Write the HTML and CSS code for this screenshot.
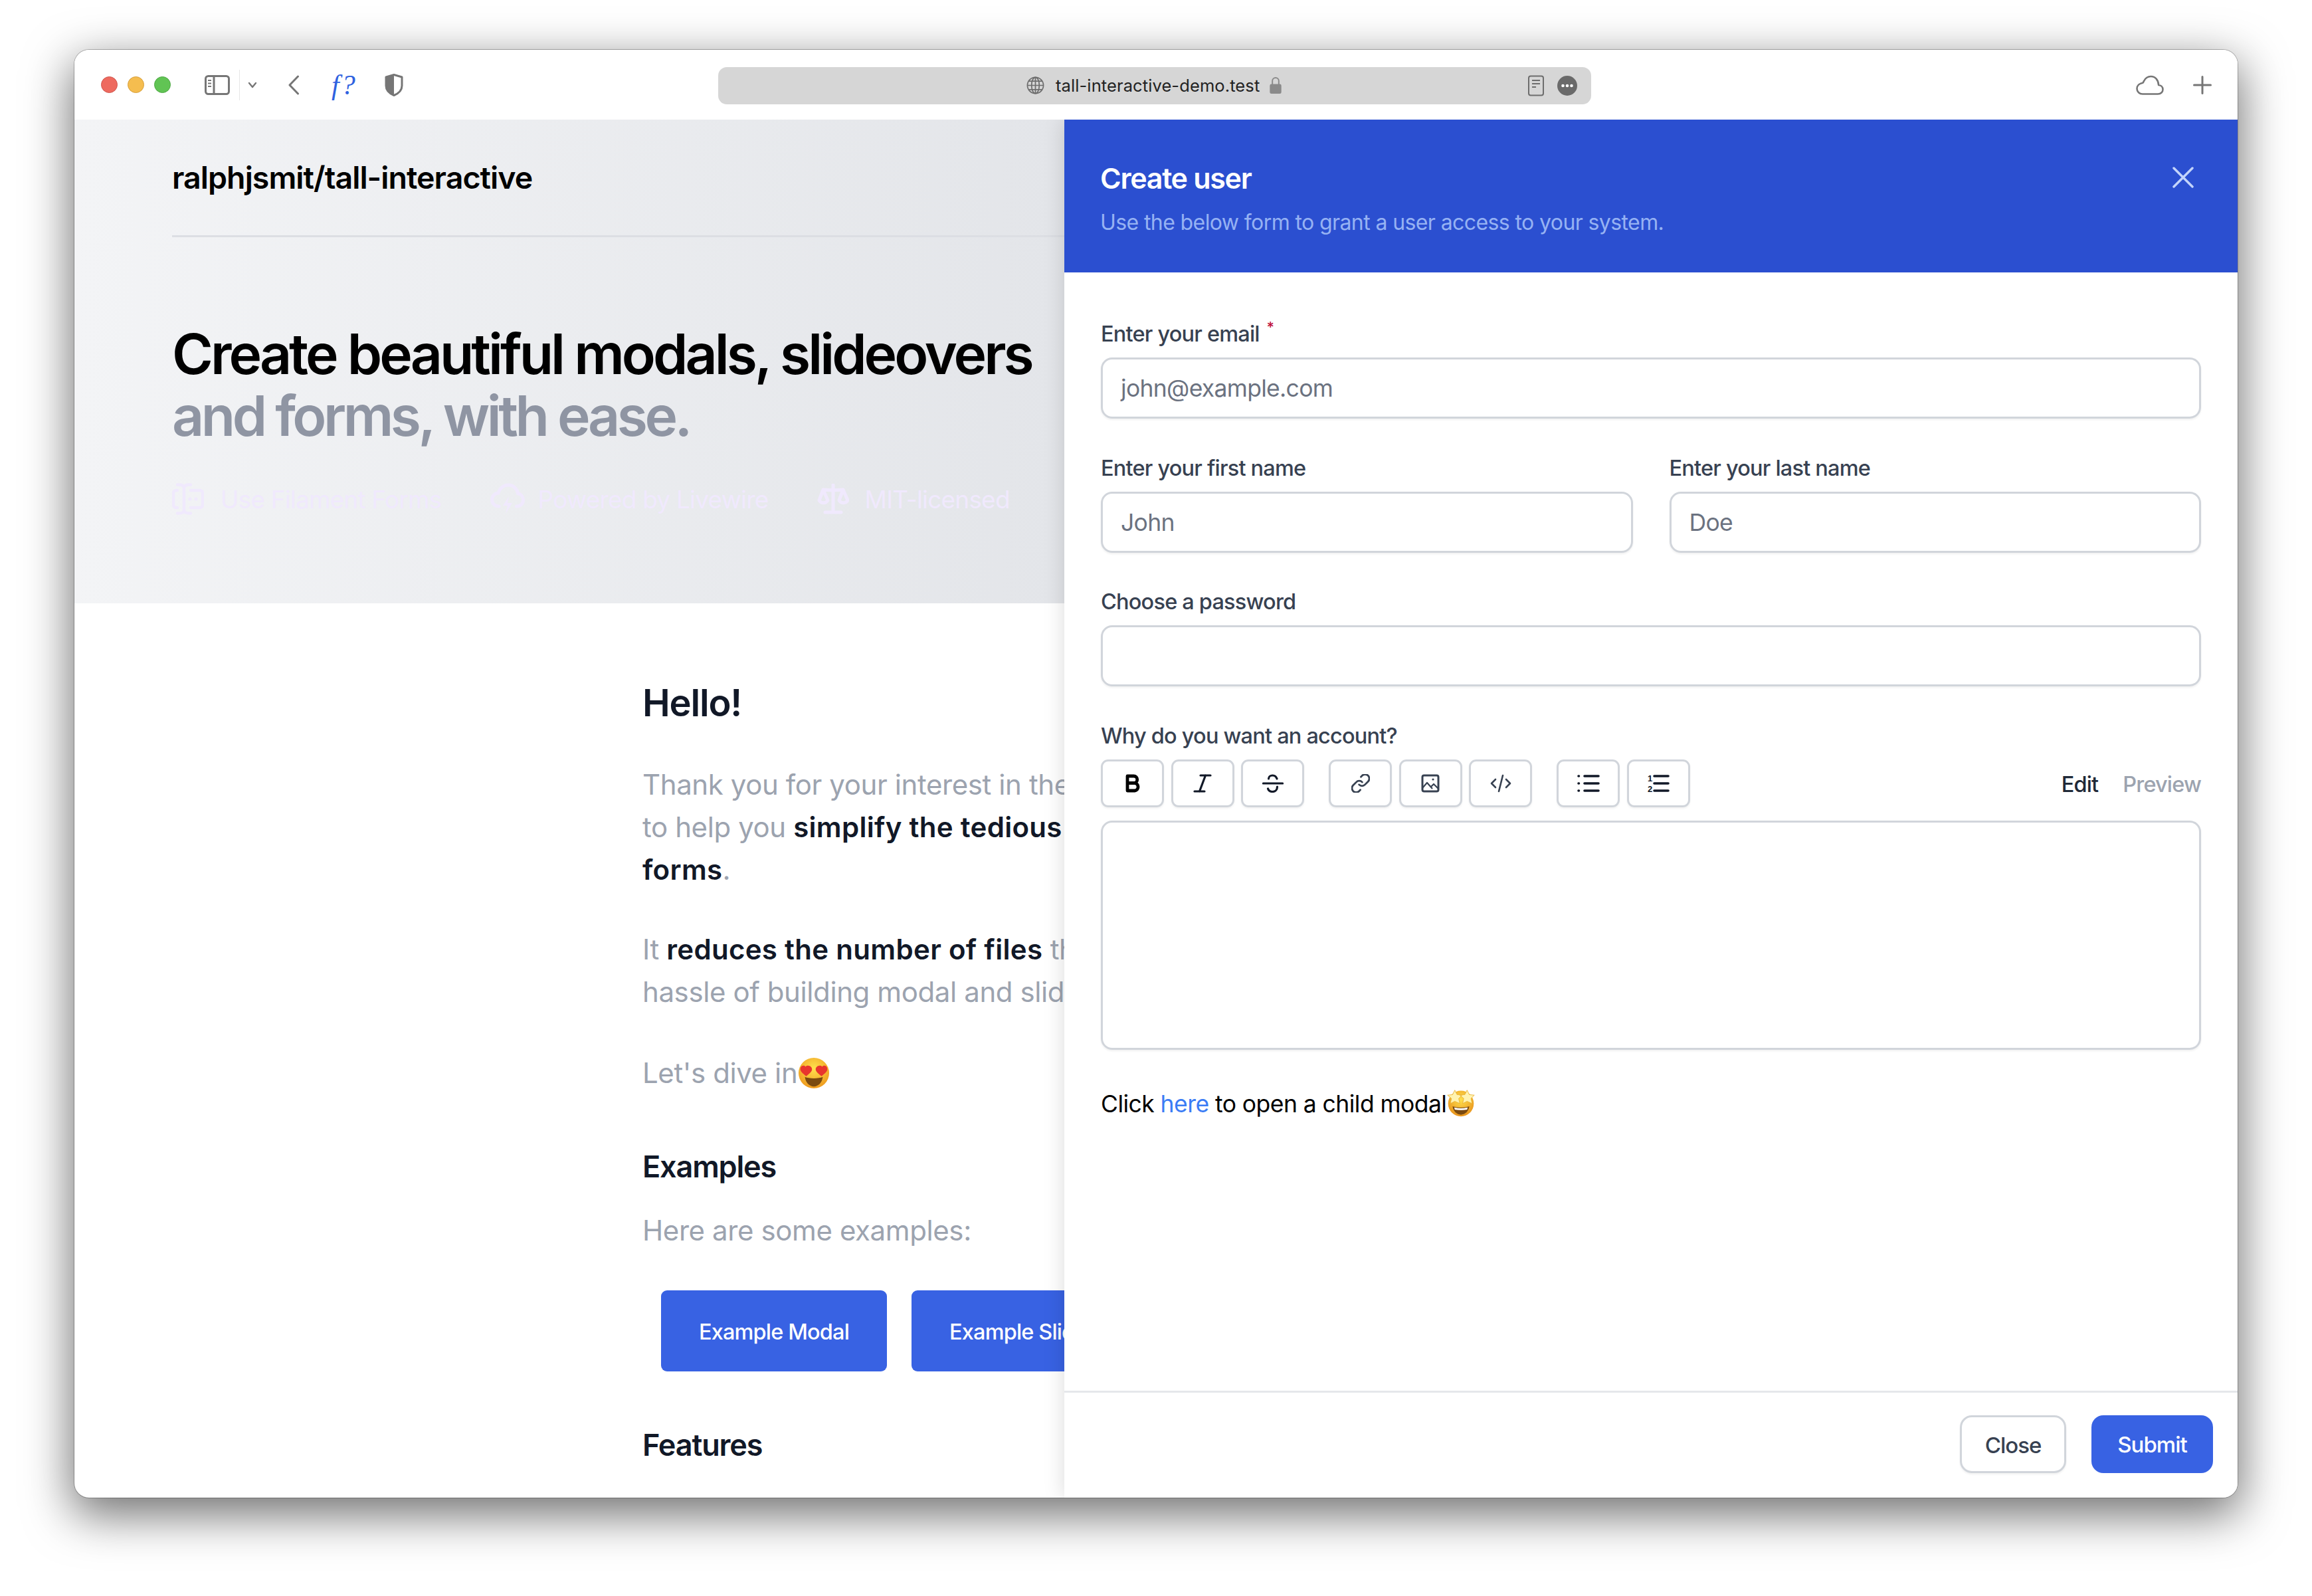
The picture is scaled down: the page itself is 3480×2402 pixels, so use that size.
FILE: index.html
```html
<!DOCTYPE html>
<html>
<head>
	<meta charset="UTF-8">
	<title>tall-interactive-demo.test</title>
	<link rel="stylesheet" href="styles.css">
</head>
<body>
<div class="window">
	<div class="toolbar">
		<div class="toolbar-left">
			<span class="light light-red"></span>
			<span class="light light-yellow"></span>
			<span class="light light-green"></span>
			<svg class="tb-sidebar" viewBox="0 0 38 30" fill="none" stroke="#767676" stroke-width="3"><rect x="1.5" y="1.5" width="35" height="27" rx="4"/><path d="M14 2v26"/><path d="M5 8h5M5 12.500h5M5 17h5" stroke-width="2"/></svg>
			<span class="tb-divider"></span>
			<svg class="tb-chevron" viewBox="0 0 14 10" fill="none" stroke="#767676" stroke-width="2.400" stroke-linecap="round" stroke-linejoin="round"><path d="M2 2l5 6 5-6"/></svg>
			<svg class="tb-back" viewBox="0 0 18 30" fill="none" stroke="#767676" stroke-width="3" stroke-linecap="round" stroke-linejoin="round"><path d="M15.500 2L3 15l12.500 13"/></svg>
			<span class="tb-ext">f?</span>
			<svg class="tb-shield" viewBox="0 0 28 34" fill="none"><path d="M14 1.500L2 5v13c0 7 6 12 12 14.500C20 30 26 25 26 18V5z" stroke="#767676" stroke-width="3" stroke-linejoin="round"/><path d="M14 1.500L2 5v13c0 7 6 12 12 14.500z" fill="#767676"/></svg>
		</div>
		<div class="url-bar">
			<div class="url-center">
				<svg class="url-globe" viewBox="0 0 28 28" fill="none" stroke="#6d6d6d" stroke-width="1.800"><circle cx="14" cy="14" r="12.500"/><ellipse cx="14" cy="14" rx="6" ry="12.500"/><path d="M14 1.500v25M2 14h24M4 7.500h20M4 20.500h20"/></svg>
				<span class="url-text">tall-interactive-demo.test</span>
				<svg class="url-lock" viewBox="0 0 20 28" fill="none"><path d="M5 13V7a5 5 0 0 1 10 0v6" stroke="#8a8a8a" stroke-width="2"/><rect x="1" y="12" width="18" height="15" rx="2.500" fill="#8a8a8a"/></svg>
			</div>
			<svg class="url-doc" viewBox="0 0 26 32" fill="none" stroke="#6d6d6d" stroke-width="2"><rect x="2" y="1.500" width="22" height="29" rx="3"/><path d="M7 8h12M7 13h12M7 18h6"/></svg>
			<svg class="url-more" viewBox="0 0 30 30"><circle cx="15" cy="15" r="15" fill="#6a6a6a"/><circle cx="8.500" cy="15" r="2.300" fill="#fff"/><circle cx="15" cy="15" r="2.300" fill="#fff"/><circle cx="21.500" cy="15" r="2.300" fill="#fff"/></svg>
		</div>
		<div class="toolbar-right">
			<svg class="tb-cloud" viewBox="0 0 42 30" fill="none" stroke="#767676" stroke-width="2.600" stroke-linejoin="round"><path d="M10 28.500h23c4.500 0 7.500-3 7.500-6.800 0-3.800-2.900-6.500-6.400-6.700C33.800 7.500 29 2 22.500 2c-5 0-8.500 3-10.500 7-1 1.700-1.100 2.300-1.800 2.700C5 12.500 1.500 16 1.500 20.500c0 4.700 3.800 8 8.500 8z"/></svg>
			<svg class="tb-plus" viewBox="0 0 28 28" fill="none" stroke="#767676" stroke-width="3" stroke-linecap="round"><path d="M14 1.500v25M1.500 14h25"/></svg>
		</div>
	</div>
	<div class="viewport">
		<div class="page">
			<div class="hero">
				<div class="nav">ralphjsmit/tall-interactive</div>
				<h1 class="hero-title">Create beautiful modals, slideovers<br><span class="hero-muted">and forms, with ease.</span></h1>
				<div class="hero-features">
					<span class="feature">
						<svg class="feature-icon" viewBox="0 0 48 48" fill="none" stroke="#f0e9fd" stroke-width="4.500" stroke-linecap="round"><path d="M8 2.500h3c3 0 6 1.500 7 4 1-2.500 4-4 7-4h3M18 6.500v35M8 45.500h3c3 0 6-1.500 7-4 1 2.500 4 4 7 4h3M8 11H6a4 4 0 0 0-4 4v18a4 4 0 0 0 4 4h2M28 11h14a4 4 0 0 1 4 4v18a4 4 0 0 1-4 4H28"/><circle cx="27" cy="24" r="2.600" fill="#f0e9fd" stroke="none"/><circle cx="36" cy="24" r="2.600" fill="#f0e9fd" stroke="none"/></svg>
						Use Filament Forms</span>
					<span class="feature feature-wire">
						<svg class="feature-icon" viewBox="0 0 52 48" fill="none" stroke="#f0e9fd" stroke-width="5" stroke-linecap="round"><path d="M13 35C6 35 2.500 30 2.500 25S6 15.500 12 15C14 8 20 3 27 3c8 0 13.500 6 14.500 12.500 4.500 1 8 5 8 10 0 5.500-4 9.500-10 9.500"/><path d="M28 20l-9 14h7l-3 12 10-16h-7z" fill="#f0e9fd" stroke="none"/></svg>
						Powered by Livewire</span>
					<span class="feature feature-mit">
						<svg class="feature-icon" viewBox="0 0 48 46" fill="none" stroke="#f0e9fd" stroke-width="5" stroke-linecap="round" stroke-linejoin="round"><path d="M24 2v38M12 43h24M9 9c10 1 20 1 30 0M9 9L3 25a7.500 7.500 0 0 0 13 0zM39 9l-6 16a7.500 7.500 0 0 0 13 0z"/></svg>
						MIT-licensed</span>
				</div>
			</div>
			<div class="article">
				<h2 class="article-hello">Hello!</h2>
				<p class="article-p">Thank you for your interest in the<br>to help you <strong>simplify the tedious<br>forms</strong>.</p>
				<p class="article-p">It <strong>reduces the number of files</strong> that<br>hassle of building modal and slideover</p>
				<p class="article-p article-dive">Let's dive in<svg class="emoji" viewBox="0 0 50 50"><defs><radialGradient id="face1" cx="50%" cy="35%" r="65%"><stop offset="0" stop-color="#ffe14d"/><stop offset="1" stop-color="#ee9a1e"/></radialGradient></defs><circle cx="25" cy="25" r="24" fill="url(#face1)"/><path d="M12 15c-4-4-9 0-8 5 1 4 6 7 9 10 3-3 8-6 9-10 1-5-6-9-10-5zM38 15c-4-4-11 0-10 5 1 4 6 7 9 10 3-3 8-6 9-10 1-5-4-9-8-5z" fill="#e8352e"/><path d="M11 31c6 3 22 3 28 0-1 9-7 15-14 15s-13-6-14-15z" fill="#7a4a10"/></svg></p>
				<h3 class="article-h3 article-examples">Examples</h3>
				<p class="article-p article-here">Here are some examples:</p>
				<div class="article-buttons">
					<span class="demo-button">Example Modal</span>
					<span class="demo-button">Example Slideover</span>
				</div>
				<h3 class="article-h3 article-features">Features</h3>
			</div>
		</div>
		<div class="panel">
			<div class="panel-head">
				<div class="panel-titles">
					<div class="panel-title">Create user</div>
					<div class="panel-sub">Use the below form to grant a user access to your system.</div>
				</div>
				<svg class="panel-close" viewBox="0 0 32 32" fill="none" stroke="#c3d4fb" stroke-width="3.500" stroke-linecap="round"><path d="M2 2l28 28M30 2L2 30"/></svg>
			</div>
			<div class="panel-form">
				<div class="field">
					<div class="label">Enter your email <sup class="req">*</sup></div>
					<div class="input">john@example.com</div>
				</div>
				<div class="field-row">
					<div class="field">
						<div class="label">Enter your first name</div>
						<div class="input">John</div>
					</div>
					<div class="field">
						<div class="label">Enter your last name</div>
						<div class="input">Doe</div>
					</div>
				</div>
				<div class="field">
					<div class="label">Choose a password</div>
					<div class="input"></div>
				</div>
				<div class="field">
					<div class="label">Why do you want an account?</div>
					<div class="md-bar">
						<div class="md-group">
							<span class="md-btn"><svg viewBox="0 0 24 28" fill="none" stroke="#000" stroke-width="4.800" stroke-linejoin="round"><path d="M4 3h9.500a5.200 5.200 0 0 1 0 10.500H4zM4 13.500h11a5.800 5.800 0 0 1 0 11.500H4z"/></svg></span>
							<span class="md-btn"><svg viewBox="0 0 28 28" fill="none" stroke="#111827" stroke-width="3.200" stroke-linecap="round"><path d="M11 2h15M2 26h15M18.500 2l-9 24"/></svg></span>
							<span class="md-btn"><svg viewBox="0 0 32 28" fill="none" stroke="#111827" stroke-width="3.200" stroke-linecap="round"><path d="M1.500 14h29M22 7c-1-3-3.500-5-6.500-5C12 2 9.500 4 9.500 7M22.500 19c0 4.500-3 7.500-7 7.500-3.500 0-6-1.500-7-4.500"/></svg></span>
						</div>
						<div class="md-group">
							<span class="md-btn"><svg viewBox="0 0 30 30" fill="none" stroke="#374151" stroke-width="3" stroke-linecap="round"><path d="M12.500 17a6.500 6.500 0 0 0 9.500 0l5-5a6.500 6.500 0 0 0-9.500-9.500l-2 2M17.500 13a6.500 6.500 0 0 0-9.500 0l-5 5a6.500 6.500 0 0 0 9.500 9.500l2-2"/></svg></span>
							<span class="md-btn"><svg viewBox="0 0 28 28" fill="none" stroke="#374151" stroke-width="3" stroke-linejoin="round"><rect x="2" y="2" width="24" height="24" rx="2.500"/><path d="M2 21l7-8 8 9M15 19l4-4 7 7" stroke-width="2.200"/><circle cx="18" cy="8" r="1.600" fill="#374151" stroke="none"/></svg></span>
							<span class="md-btn"><svg viewBox="0 0 34 28" fill="none" stroke="#374151" stroke-width="2.600" stroke-linecap="round" stroke-linejoin="round"><path d="M9 8l-6 6 6 6M25 8l6 6-6 6M20 2l-6 24"/></svg></span>
						</div>
						<div class="md-group">
							<span class="md-btn"><svg viewBox="0 0 34 28" fill="none" stroke="#111827" stroke-width="3.600" stroke-linecap="round"><path d="M11 3h21M11 14h21M11 25h21M2 3h.500M2 14h.500M2 25h.500"/></svg></span>
							<span class="md-btn"><svg viewBox="0 0 34 28" fill="none" stroke="#111827" stroke-width="3.600" stroke-linecap="round"><path d="M11 3h21M11 14h21M11 25h21"/><text class="md-num" x="1" y="11" stroke="none" fill="#111827">1</text><text class="md-num" x="1" y="27" stroke="none" fill="#111827">2</text></svg></span>
						</div>
						<div class="md-tabs">
							<span class="md-tab-on">Edit</span>
							<span class="md-tab-off">Preview</span>
						</div>
					</div>
					<div class="textarea"></div>
				</div>
				<div class="child-line">Click <span class="child-link">here</span> to open a child modal<svg class="emoji emoji-small" viewBox="0 0 50 50"><defs><radialGradient id="face2" cx="50%" cy="35%" r="65%"><stop offset="0" stop-color="#ffe14d"/><stop offset="1" stop-color="#e8931c"/></radialGradient></defs><circle cx="25" cy="26" r="23" fill="url(#face2)"/><path d="M14 2l4 8 9 1-6 6 2 9-9-4-8 4 2-9-7-6 9-1zM36 2l4 8 9 1-6 6 2 9-9-4-8 4 2-9-7-6 9-1z" fill="#fff3b0" stroke="#e8b030"/><path d="M10 31c8 3 22 3 30 0-1 9-8 15-15 15s-14-6-15-15z" fill="#7a4a10"/><path d="M13 33c8 2 16 2 24 0l-1 4c-7 1-15 1-22 0z" fill="#fff"/></svg></div>
			</div>
			<div class="panel-foot">
				<span class="btn btn-close">Close</span>
				<span class="btn btn-submit">Submit</span>
			</div>
		</div>
	</div>
</div>
</body>
</html>
```

FILE: styles.css
```css
html,body{margin:0;padding:0;background:#fff;}
body{font-family:Inter,"Liberation Sans",sans-serif;width:3480px;height:2402px;overflow:hidden;padding:75px 112px 0;box-sizing:border-box;}
p,h1,h2,h3{margin:0;}
svg{display:block;flex:none;}

.window{width:3256px;height:2179px;display:flex;flex-direction:column;background:#fff;border-radius:22px;overflow:hidden;}
.window{box-shadow:0 22px 70px 4px rgba(0,0,0,.56),0 0 0 1px rgba(0,0,0,.25);}

.toolbar{height:105px;flex:none;display:flex;align-items:center;background:#fff;}
.toolbar-left{width:969px;flex:none;display:flex;align-items:center;padding-left:40px;box-sizing:border-box;}
.light{width:25px;height:25px;border-radius:50%;box-sizing:border-box;margin-right:15px;}
.light-red{background:#ee6a5f;border:1px solid #d0574e;}
.light-yellow{background:#f5bd4f;border:1px solid #d69f3c;}
.light-green{background:#61c454;border:1px solid #4fa845;margin-right:51px;}
.tb-sidebar{width:38px;height:30px;}
.tb-divider{width:1px;height:46px;background:#e6e6e6;margin:0 12px 0 14px;}
.tb-chevron{width:14px;height:10px;}
.tb-back{width:18px;height:30px;margin-left:46px;}
.tb-ext{font:italic 42px "Liberation Serif",serif;color:#2f62e0;width:42px;margin-left:48px;letter-spacing:3px;white-space:nowrap;}
.tb-shield{width:28px;height:34px;margin-left:38px;}

.url-bar{width:1314px;height:56px;margin-top:2px;flex:none;display:flex;align-items:center;background:#d6d6d6;border-radius:13px;padding-right:21px;box-sizing:border-box;}
.url-center{flex:1;display:flex;align-items:center;padding-left:464px;}
.url-globe{width:27px;height:27px;}
.url-text{font-size:25.500px;letter-spacing:.1px;color:#222;margin-left:17px;white-space:nowrap;}
.url-lock{width:20px;height:27px;margin-left:14px;}
.url-doc{width:26px;height:32px;}
.url-more{width:30px;height:30px;margin-left:19px;}

.toolbar-right{flex:1;display:flex;align-items:center;justify-content:flex-end;padding-right:39px;}
.tb-cloud{width:42px;height:30px;}
.tb-plus{width:28px;height:28px;margin-left:44px;}

.viewport{flex:1;position:relative;overflow:hidden;}
.page{width:3256px;}

.hero{height:728px;padding-left:147px;box-sizing:border-box;background:linear-gradient(90deg,#f3f4f6 0,#e3e5e9 1490px);}
.nav{height:177px;line-height:174px;border-bottom:3px solid #dcdee3;box-sizing:border-box;font-size:46.500px;font-weight:600;color:#000;letter-spacing:-.95px;}
.hero-title{width:max-content;margin-top:129px;font-size:84px;line-height:93px;font-weight:600;color:#000;letter-spacing:-4px;}
.hero-muted{color:#8f95a3;letter-spacing:-4.500px;}
.hero-features{margin-top:56px;display:flex;height:46px;align-items:center;color:#f0e9fd;font-size:37px;letter-spacing:-.8px;}
.feature{display:flex;align-items:center;margin-right:73px;white-space:nowrap;}
.feature-icon{width:48px;height:48px;margin-right:25px;}
.feature-wire .feature-icon{width:52px;margin-right:20px;}
.feature-mit .feature-icon{height:46px;margin-right:24px;}

.article{padding:115px 0 0 855px;white-space:nowrap;}
.article-hello{font-size:56px;line-height:70px;font-weight:600;color:#111827;letter-spacing:-1.200px;}
.article-p{margin-top:56px;font-size:42px;line-height:64px;color:#9ca3af;letter-spacing:-.4px;}
.article-p strong{font-weight:600;color:#111827;letter-spacing:.3px;}
.article-dive{display:flex;align-items:center;margin-top:58px;}
.article-h3{font-size:45px;line-height:60px;font-weight:600;color:#111827;letter-spacing:-1.150px;}
.article-examples{margin-top:79px;}
.article-here{margin-top:34px;}
.article-buttons{display:flex;gap:37px;margin:58px 0 0 28px;}
.demo-button{height:122px;line-height:126px;padding:0 57px;border-radius:9px;background:#3862e3;color:#fff;font-size:32.500px;font-weight:500;letter-spacing:-.85px;}
.article-features{margin-top:81px;}

.emoji{width:48px;height:50px;margin-left:1px;}
.emoji-small{width:42px;height:44px;display:inline-block;vertical-align:-8px;}

.panel{position:absolute;top:0;right:0;bottom:0;width:1766px;display:flex;flex-direction:column;background:#fff;box-shadow:0 0 30px rgba(0,0,0,.15);}
.panel-head{height:230px;flex:none;display:flex;justify-content:space-between;background:#2b4fd0;padding:0 66px 0 54px;box-sizing:border-box;}
.panel-title{margin-top:60px;font-size:43px;line-height:56px;font-weight:600;color:#fff;letter-spacing:-1.300px;}
.panel-sub{margin-top:17px;font-size:32px;line-height:44px;color:#96b2f3;letter-spacing:-.6px;}
.panel-close{width:32px;height:32px;margin-top:71px;}

.panel-form{flex:1;padding:70px 55px 0;display:flex;flex-direction:column;gap:51.500px;}
.field-row{display:flex;gap:55px;}
.field-row .field{flex:1;}
.label{height:46px;line-height:46px;margin-bottom:12px;font-size:32.500px;font-weight:500;color:#374151;white-space:nowrap;letter-spacing:-.8px;}
.req{font-size:22px;line-height:0;color:#be123c;font-weight:500;vertical-align:14px;margin-left:3px;}
.input{height:92px;line-height:88px;box-sizing:border-box;padding:0 27px;border:3px solid #d1d5db;border-radius:17px;box-shadow:0 2px 3px rgba(0,0,0,.06);font-size:35.500px;letter-spacing:-.7px;color:#6b7280;}

.md-bar{display:flex;align-items:center;gap:37px;}
.md-group{display:flex;gap:10.500px;}
.md-btn{width:95px;height:72px;box-sizing:border-box;border:3px solid #d1d5db;border-radius:11px;box-shadow:0 2px 3px rgba(0,0,0,.05);display:flex;align-items:center;justify-content:center;}
.md-btn svg{height:28px;width:auto;}
.md-num{font:bold 13px "Liberation Sans",sans-serif;}
.md-tabs{margin-left:auto;padding-top:3px;display:flex;gap:37px;font-size:32.500px;font-weight:500;letter-spacing:-.85px;}
.md-tab-on{color:#1f2937;}
.md-tab-off{color:#9ca3af;}
.textarea{height:345px;box-sizing:border-box;margin-top:20px;border:3px solid #d1d5db;border-radius:17px;box-shadow:0 2px 3px rgba(0,0,0,.06);}

.child-line{height:56px;line-height:56px;margin-top:3px;font-size:35.500px;letter-spacing:-.55px;color:#000;white-space:nowrap;}
.child-link{color:#3b7cf5;}

.panel-foot{height:161px;flex:none;box-sizing:border-box;display:flex;justify-content:flex-end;gap:38px;padding:34px 37px 0 0;border-top:3px solid #e5e7eb;}
.btn{height:87px;line-height:88px;box-sizing:border-box;border-radius:18px;font-size:33px;font-weight:500;text-align:center;letter-spacing:-1px;}
.btn-close{width:160px;border:3px solid #d1d5db;color:#374151;box-shadow:0 2px 3px rgba(0,0,0,.06);line-height:84px;}
.btn-submit{width:183px;background:#3862e3;color:#fff;}
```
